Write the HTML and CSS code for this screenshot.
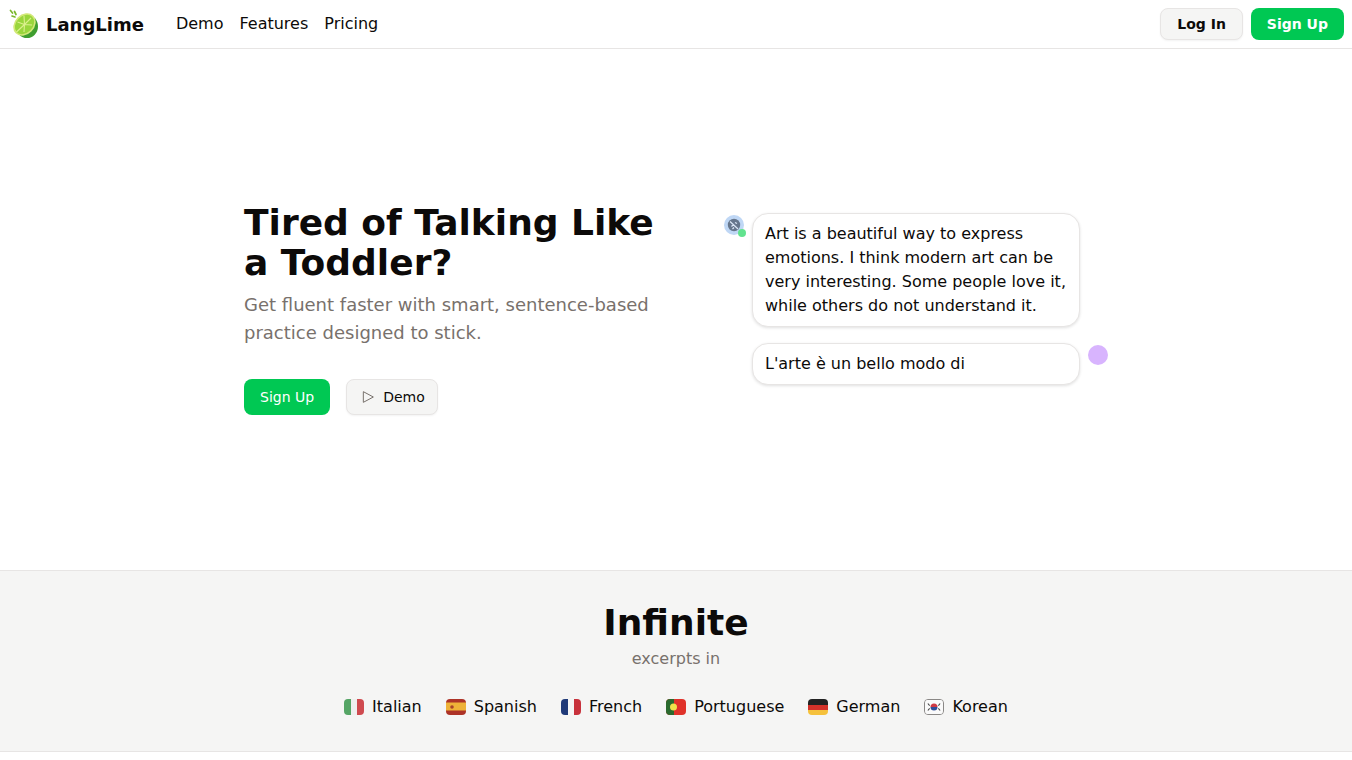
FILE: index.html
```html
<!DOCTYPE html>
<html lang="en">
<head>
    <meta charset="UTF-8">
    <meta name="viewport" content="width=device-width, initial-scale=1.0">
    <title>LangLime</title>
    <link rel="stylesheet" href="styles.css">
</head>
<body>
    <header class="navbar">
        <div class="nav-left">
            <a class="brand" href="#">
                <svg class="brand-logo" viewBox="0 0 32 32" aria-hidden="true">
                    <path d="M2.500 2.500l2 2.500M6.500 3.500l1.500 3M4 8l3 1" stroke="#7cb82f" stroke-width="1.700" stroke-linecap="round"/>
                    <ellipse cx="19" cy="18.500" rx="11" ry="11.500" fill="#3f9e2f"/>
                    <ellipse cx="16.500" cy="16.500" rx="12.500" ry="9.800" transform="rotate(-45 16.500 16.500)" fill="#d3e878"/>
                    <ellipse cx="16.500" cy="16.500" rx="10.800" ry="8.300" transform="rotate(-45 16.500 16.500)" fill="#9ad63c"/>
                    <path d="M16.500 16.500L23 10M16.500 16.500L16 8M16.500 16.500L9.500 14M16.500 16.500L8.500 24M16.500 16.500L16 24M16.500 16.500L24 17" stroke="#dcf08e" stroke-width="1.100"/>
                </svg>
                <span>LangLime</span>
            </a>
            <nav class="nav-links">
                <a href="#">Demo</a>
                <a href="#">Features</a>
                <a href="#">Pricing</a>
            </nav>
        </div>
        <div class="nav-actions">
            <button class="btn btn-muted btn-nav">Log In</button>
            <button class="btn btn-green btn-nav">Sign Up</button>
        </div>
    </header>

    <section class="hero">
        <div class="hero-inner">
            <div class="hero-copy">
                <h1>Tired of Talking Like a Toddler?</h1>
                <p>Get fluent faster with smart, sentence-based practice designed to stick.</p>
                <div class="hero-actions">
                    <button class="btn btn-green">Sign Up</button>
                    <button class="btn btn-muted btn-demo">
                        <svg class="play-icon" viewBox="0 0 24 24" aria-hidden="true">
                            <path d="M5 4l15 8-15 8z"/>
                        </svg>
                        Demo
                    </button>
                </div>
            </div>
            <div class="chat">
                <div class="chat-row">
                    <span class="avatar avatar-blue">
                        <svg viewBox="0 0 20 20" aria-hidden="true">
                            <circle cx="10" cy="10" r="6.200" fill="#66768c"/>
                            <path d="M6 6.500l8 7.500M7.500 11.500l2-2M11 7.500l2 1M8.500 14l1.500-1.500" stroke="#dbe6f5" stroke-width="1.200"/>
                        </svg>
                        <span class="avatar-dot"></span>
                    </span>
                    <div class="bubble">Art is a beautiful way to express emotions. I think modern art can be very interesting. Some people love it, while others do not understand it.</div>
                    <span class="avatar-slot"></span>
                </div>
                <div class="chat-row">
                    <span class="avatar-slot"></span>
                    <div class="bubble">L'arte è un bello modo di</div>
                    <span class="avatar avatar-purple"></span>
                </div>
            </div>
        </div>
    </section>

    <section class="languages">
        <h2>Infinite</h2>
        <p>excerpts in</p>
        <ul class="language-list">
            <li>
                <svg class="flag" viewBox="0 0 20 16" aria-hidden="true">
                    <rect width="7" height="16" fill="#55a565"/><rect x="7" width="6" height="16" fill="#efefef"/><rect x="13" width="7" height="16" fill="#cf4a4f"/>
                </svg>
                Italian
            </li>
            <li>
                <svg class="flag" viewBox="0 0 20 16" aria-hidden="true">
                    <rect width="20" height="16" fill="#ad3327"/><rect y="3.500" width="20" height="8" fill="#eeb238"/><circle cx="6" cy="8" r="1.800" fill="#a8432a"/>
                </svg>
                Spanish
            </li>
            <li>
                <svg class="flag" viewBox="0 0 20 16" aria-hidden="true">
                    <rect width="7" height="16" fill="#1f3a78"/><rect x="7" width="6" height="16" fill="#f5f5f5"/><rect x="13" width="7" height="16" fill="#c8323c"/>
                </svg>
                French
            </li>
            <li>
                <svg class="flag" viewBox="0 0 20 16" aria-hidden="true">
                    <rect width="20" height="16" fill="#e0322a"/><rect width="8" height="16" fill="#2a6a2e"/><circle cx="7.500" cy="8" r="3.500" fill="#f0e34a"/>
                </svg>
                Portuguese
            </li>
            <li>
                <svg class="flag" viewBox="0 0 20 16" aria-hidden="true">
                    <rect width="20" height="6" fill="#222"/><rect y="6" width="20" height="5" fill="#d3322a"/><rect y="11" width="20" height="5" fill="#f5c13c"/>
                </svg>
                German
            </li>
            <li>
                <svg class="flag flag-border" viewBox="0 0 20 16" aria-hidden="true">
                    <rect width="20" height="16" fill="#fafafa"/>
                    <path d="M6 8a4 4 0 0 1 8 0z" fill="#cf3a44"/><path d="M6 8a4 4 0 0 0 8 0z" fill="#2f4f9a"/>
                    <path d="M3 4l2 2.500M3 12l2-2.500M17 4l-2 2.500M17 12l-2-2.500" stroke="#444" stroke-width="1.200"/>
                </svg>
                Korean
            </li>
        </ul>
    </section>
</body>
</html>
```

FILE: styles.css
```css
* {
    box-sizing: border-box;
}

body {
    margin: 0;
    background: #ffffff;
    color: #0c0a09;
    font-family: "DejaVu Sans", sans-serif;
}

a {
    color: inherit;
    text-decoration: none;
}

.navbar {
    display: flex;
    align-items: center;
    justify-content: space-between;
    height: 49px;
    padding: 0 8px;
    border-bottom: 1px solid #e7e5e4;
}
.nav-left {
    display: flex;
    align-items: center;
    gap: 32px;
}
.brand {
    display: flex;
    align-items: center;
    gap: 6px;
    font-size: 18px;
    font-weight: 700;
}
.brand-logo {
    width: 32px;
    height: 32px;
}
.nav-links {
    display: flex;
    gap: 16px;
    margin-top: -2px;
    font-size: 16px;
}
.nav-actions {
    display: flex;
    gap: 8px;
}

.btn {
    display: inline-flex;
    align-items: center;
    height: 36px;
    padding: 0 16px;
    border-radius: 8px;
    border: none;
    font-family: inherit;
    font-size: 14px;
    cursor: pointer;
}
.btn-nav {
    height: 32px;
    font-weight: 700;
}
.btn-green {
    background-color: #00c853;
    color: #ffffff;
}
.btn-muted {
    background-color: #f5f5f4;
    border: 1px solid #e7e5e4;
    color: #0c0a09;
    box-shadow: 0 1px 2px rgba(0, 0, 0, 0.05);
}
.btn-demo {
    gap: 7px;
    padding: 0 12px 0 13px;
}
.play-icon {
    width: 16px;
    height: 16px;
    fill: none;
    stroke: #78716c;
    stroke-width: 1.500;
    stroke-linejoin: round;
}

.hero {
    display: flex;
    align-items: center;
    justify-content: center;
    height: 521px;
    padding-bottom: 2px;
}
.hero-inner {
    display: grid;
    grid-template-columns: 432px 384px;
    gap: 48px;
    align-items: center;
    width: 864px;
}
.hero-copy h1 {
    margin: 0 0 8px;
    font-size: 36px;
    line-height: 40px;
    font-weight: 700;
}
.hero-copy p {
    margin: 0 0 32px;
    font-size: 18px;
    line-height: 28px;
    color: #78716c;
}
.hero-actions {
    display: flex;
    gap: 16px;
}

.chat {
    display: flex;
    flex-direction: column;
    gap: 16px;
    min-height: 192px;
}
.chat-row {
    display: flex;
    align-items: flex-start;
    gap: 8px;
}
.bubble {
    flex: 1;
    padding: 8px 12px;
    border: 1px solid #e7e5e4;
    border-radius: 16px;
    background: #ffffff;
    font-size: 16px;
    line-height: 24px;
    box-shadow: 0 1px 3px rgba(0, 0, 0, 0.12);
}
.avatar-slot {
    width: 20px;
    flex-shrink: 0;
}
.avatar {
    position: relative;
    flex-shrink: 0;
    width: 20px;
    height: 20px;
    margin-top: 2px;
    border-radius: 50%;
}
.avatar svg {
    display: block;
    width: 20px;
    height: 20px;
}
.avatar-blue {
    background-color: #bfd7f5;
}
.avatar-purple {
    background-color: #d8b4fe;
}
.avatar-dot {
    position: absolute;
    right: -2px;
    bottom: -2px;
    width: 8px;
    height: 8px;
    border-radius: 50%;
    background-color: #62e38f;
}

.languages {
    height: 182px;
    padding-top: 32px;
    border-top: 1px solid #e7e5e4;
    border-bottom: 1px solid #e7e5e4;
    background-color: #f5f5f4;
    text-align: center;
}
.languages h2 {
    margin: 0;
    font-size: 36px;
    line-height: 40px;
    font-weight: 700;
}
.languages p {
    margin: 4px 0 0;
    font-size: 16px;
    line-height: 24px;
    color: #78716c;
}
.language-list {
    display: flex;
    justify-content: center;
    gap: 24px;
    margin: 24px 0 0;
    padding: 0;
    list-style: none;
    font-size: 16px;
    line-height: 24px;
}
.language-list li {
    display: flex;
    align-items: center;
    gap: 8px;
}
.flag {
    display: block;
    width: 20px;
    height: 16px;
    border-radius: 4px;
}
.flag-border {
    border: 1px solid #8a8886;
}
```
